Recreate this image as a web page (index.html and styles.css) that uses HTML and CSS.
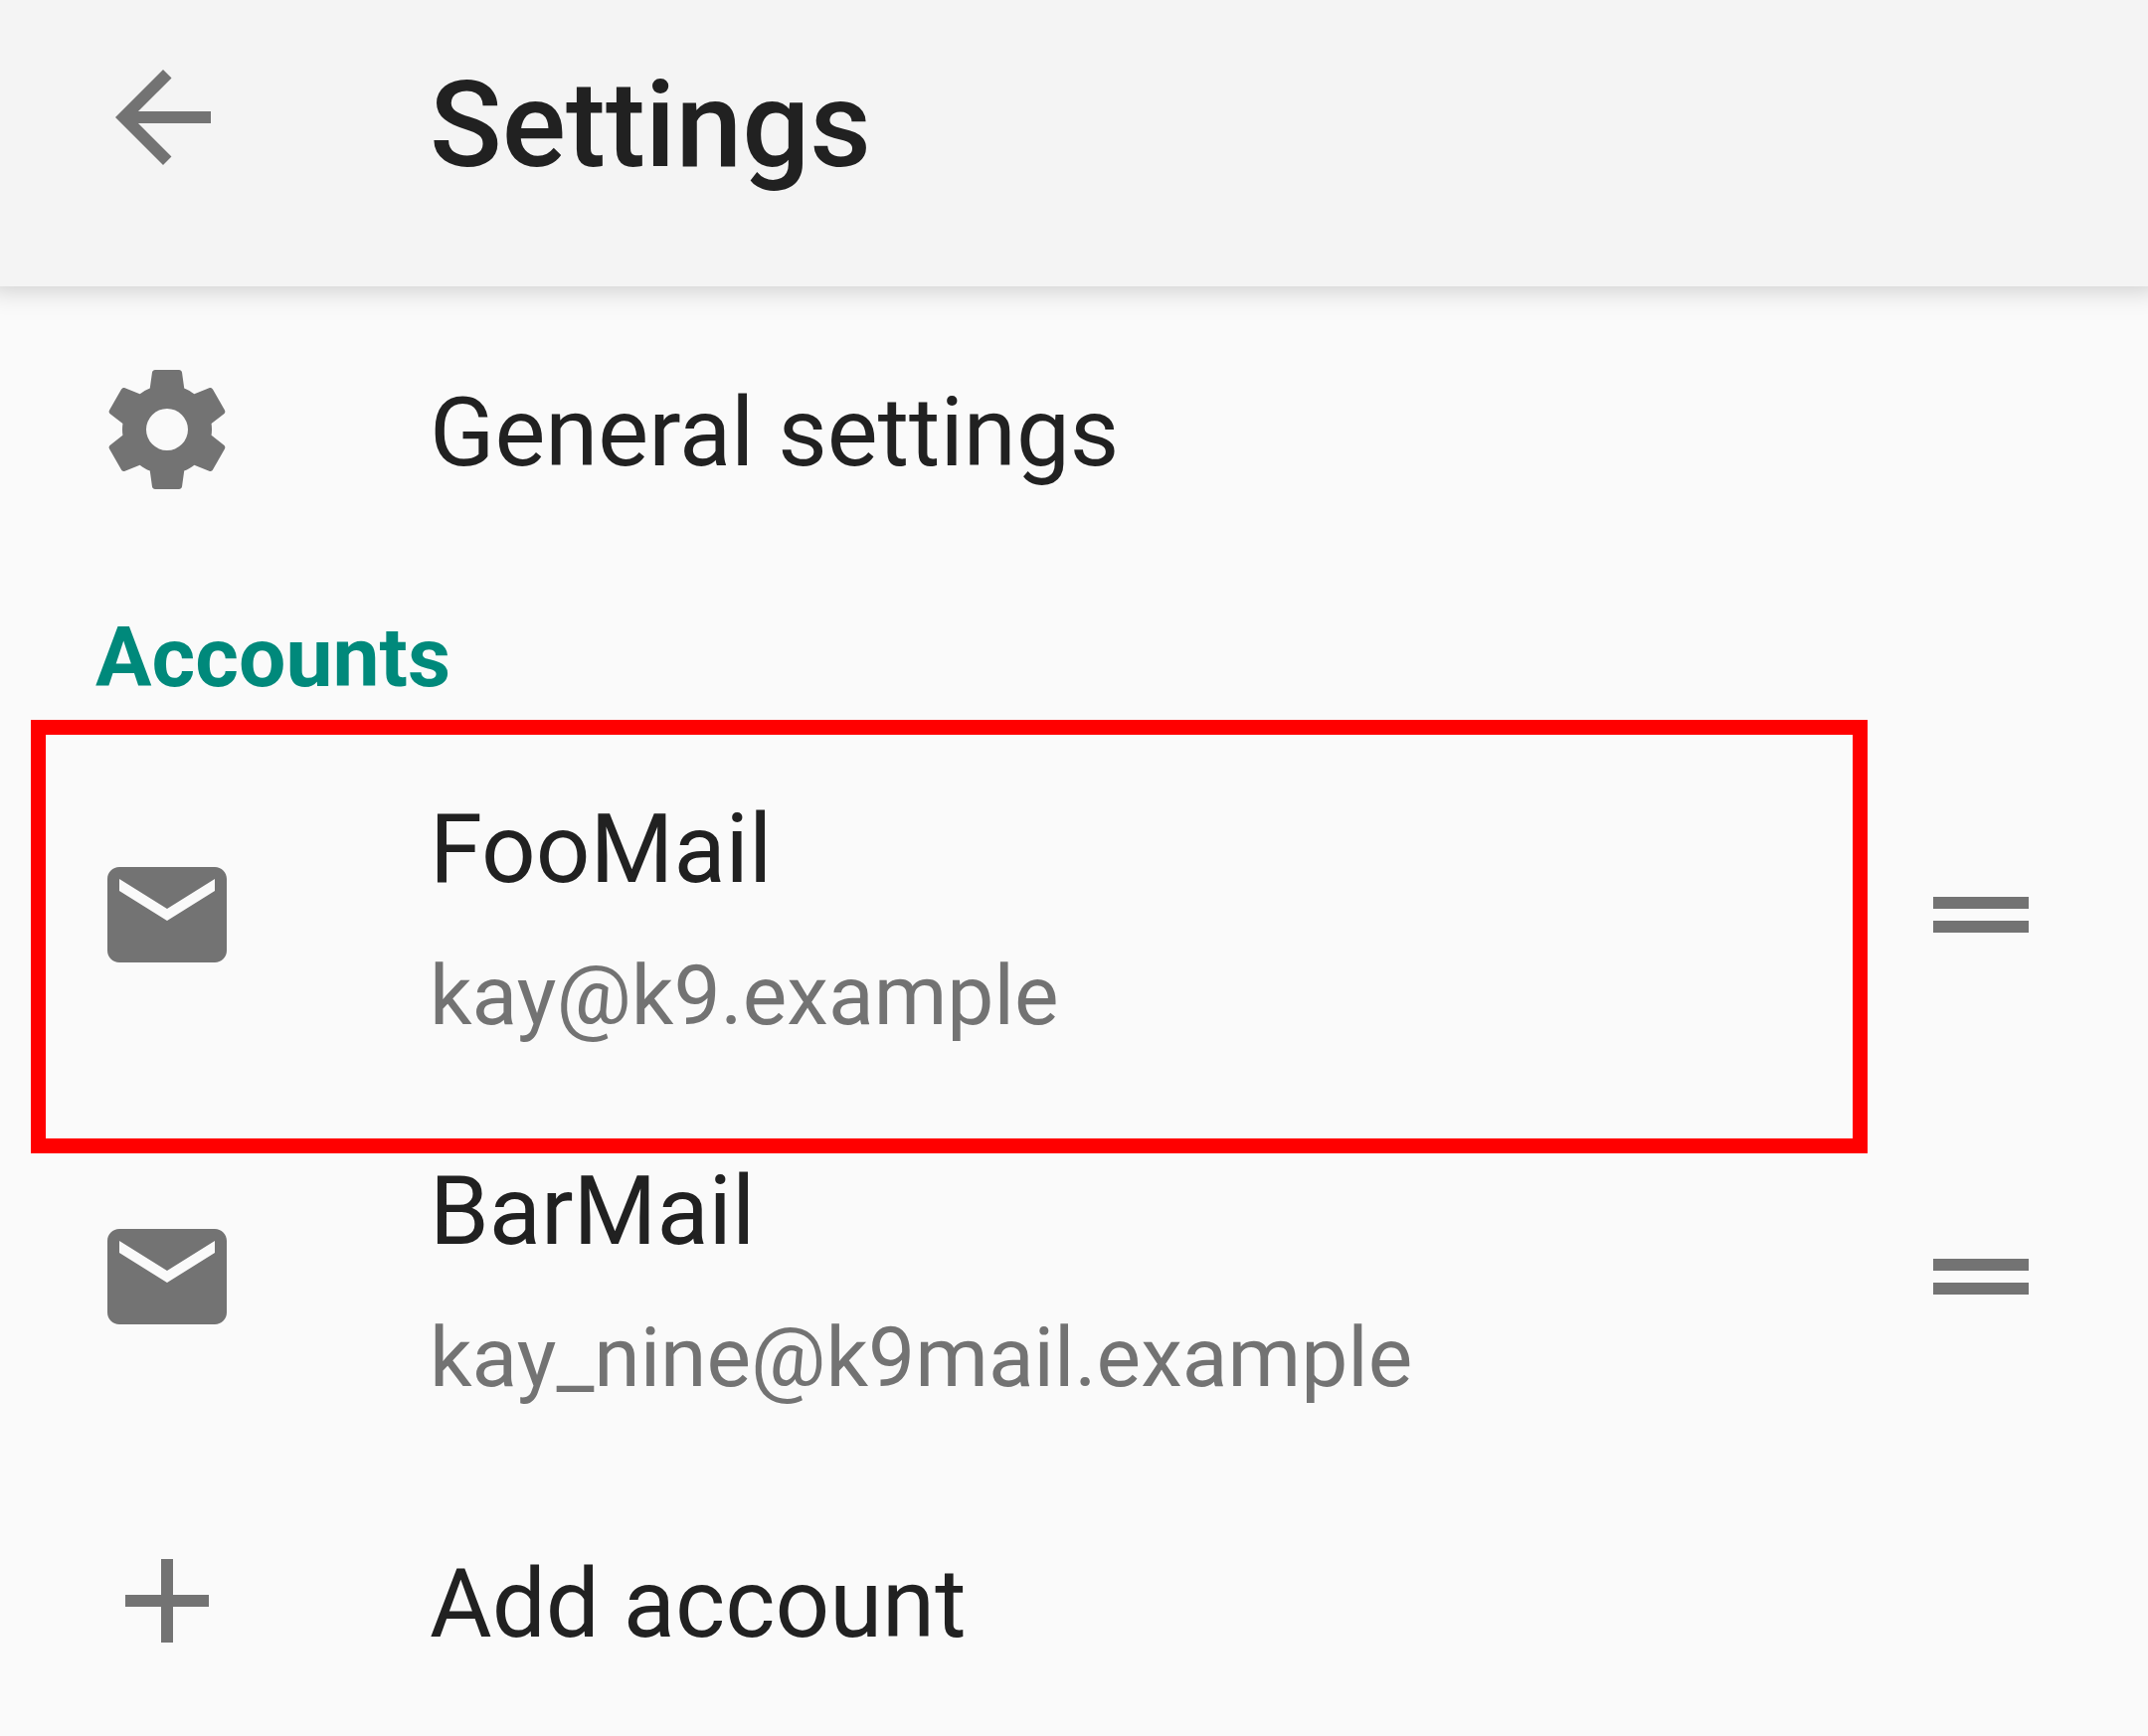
FILE: index.html
```html
<!DOCTYPE html>
<html lang="en">
<head>
<meta charset="utf-8">
<meta name="viewport" content="width=device-width, initial-scale=1">
<title>Settings</title>
<link rel="stylesheet" href="styles.css">
</head>
<body>
<header class="app-bar">
  <button class="icon-button back" type="button" aria-label="Back">
    <svg class="icon" viewBox="0 0 24 24" aria-hidden="true"><path d="M20 11H7.83l5.59-5.59L12 4l-8 8 8 8 1.41-1.41L7.83 13H20v-2z"/></svg>
  </button>
  <h1 class="app-title">Settings</h1>
</header>
<main class="settings">
  <button class="row" type="button">
    <svg class="icon" viewBox="0 0 24 24" aria-hidden="true"><path d="M12,15.5A3.5,3.5 0 0,1 8.5,12A3.5,3.5 0 0,1 12,8.5A3.5,3.5 0 0,1 15.5,12A3.5,3.5 0 0,1 12,15.5M19.43,12.97C19.47,12.65 19.5,12.33 19.5,12C19.5,11.67 19.47,11.34 19.43,11L21.54,9.37C21.73,9.22 21.78,8.95 21.66,8.73L19.66,5.27C19.54,5.05 19.27,4.96 19.05,5.05L16.56,6.05C16.04,5.66 15.5,5.32 14.87,5.07L14.5,2.42C14.46,2.18 14.25,2 14,2H10C9.75,2 9.54,2.18 9.5,2.42L9.13,5.07C8.5,5.32 7.96,5.66 7.44,6.05L4.95,5.05C4.73,4.96 4.46,5.05 4.34,5.27L2.34,8.73C2.21,8.95 2.27,9.22 2.46,9.37L4.57,11C4.53,11.34 4.5,11.67 4.5,12C4.5,12.33 4.53,12.65 4.57,12.97L2.46,14.63C2.27,14.78 2.21,15.05 2.34,15.27L4.34,18.73C4.46,18.95 4.73,19.03 4.95,18.95L7.44,17.94C7.96,18.34 8.5,18.68 9.13,18.93L9.5,21.58C9.54,21.82 9.75,22 10,22H14C14.25,22 14.46,21.82 14.5,21.58L14.87,18.93C15.5,18.67 16.04,18.34 16.56,17.94L19.05,18.95C19.27,19.03 19.54,18.95 19.66,18.73L21.66,15.27C21.78,15.05 21.73,14.78 21.54,14.63L19.43,12.97Z"/></svg>
    <span class="row-title">General settings</span>
  </button>
  <h2 class="section-title">Accounts</h2>
  <ul class="accounts">
    <li class="account highlighted">
      <svg class="icon" viewBox="0 0 24 24" aria-hidden="true"><path d="M20 4H4c-1.100 0-2 .9-2 2v12c0 1.100.9 2 2 2h16c1.100 0 2-.9 2-2V6c0-1.100-.9-2-2-2zm0 4l-8 5-8-5V6l8 5 8-5v2z"/></svg>
      <a class="account-text" href="#foomail">
        <span class="row-title">FooMail</span>
        <span class="row-summary">kay@k9.example</span>
      </a>
      <button class="icon-button" type="button" aria-label="Reorder FooMail">
        <svg class="icon" viewBox="0 0 24 24" aria-hidden="true"><path d="M20 9H4v2h16V9zM4 15h16v-2H4v2z"/></svg>
      </button>
    </li>
    <li class="account">
      <svg class="icon" viewBox="0 0 24 24" aria-hidden="true"><path d="M20 4H4c-1.100 0-2 .9-2 2v12c0 1.100.9 2 2 2h16c1.100 0 2-.9 2-2V6c0-1.100-.9-2-2-2zm0 4l-8 5-8-5V6l8 5 8-5v2z"/></svg>
      <a class="account-text" href="#barmail">
        <span class="row-title">BarMail</span>
        <span class="row-summary">kay_nine@k9mail.example</span>
      </a>
      <button class="icon-button" type="button" aria-label="Reorder BarMail">
        <svg class="icon" viewBox="0 0 24 24" aria-hidden="true"><path d="M20 9H4v2h16V9zM4 15h16v-2H4v2z"/></svg>
      </button>
    </li>
  </ul>
  <button class="row row-last" type="button">
    <svg class="icon" viewBox="0 0 24 24" aria-hidden="true"><path d="M19 13h-6v6h-2v-6H5v-2h6V5h2v6h6v2z"/></svg>
    <span class="row-title">Add account</span>
  </button>
</main>
</body>
</html>
```
FILE: styles.css
```css
* {
  box-sizing: border-box;
}

body {
  margin: 0;
  background: #fafafa;
  color: #212121;
  font-family: Roboto, "Liberation Sans", sans-serif;
}

button {
  padding: 0;
  border: 0;
  background: none;
  color: inherit;
  font: inherit;
  text-align: left;
}

.icon {
  display: block;
  flex: none;
  width: 144px;
  height: 144px;
  fill: #737373;
}

.icon-button {
  flex: none;
}

.app-bar {
  display: flex;
  align-items: flex-start;
  gap: 196px;
  padding: 46px 92px 92px;
  background: #f4f4f4;
  box-shadow: 0 -8px 24px 12px rgba(0, 0, 0, 0.18);
}

.app-title {
  margin: 0;
  padding-top: 10px;
  font-size: 120px;
  font-weight: 500;
  line-height: 140px;
}

.row {
  display: flex;
  align-items: center;
  gap: 192px;
  width: 100%;
  padding: 72px 96px;
}

.row .row-title {
  padding-top: 6px;
}

.row-last {
  padding-bottom: 48px;
}

.row-title {
  font-size: 96px;
  line-height: 112px;
}

.section-title {
  margin: 0;
  padding: 36px 96px 26px;
  color: #00897b;
  font-size: 84px;
  font-weight: 700;
  line-height: 100px;
}

.accounts {
  margin: 0;
  padding: 0;
  list-style: none;
}

.account {
  position: relative;
  display: flex;
  align-items: center;
  gap: 192px;
  padding: 50px 96px;
}

.account-text {
  display: flex;
  flex: 1;
  flex-direction: column;
  gap: 42px;
  padding-top: 10px;
  color: inherit;
  text-decoration: none;
}

.row-summary {
  color: #737373;
  font-size: 84px;
  line-height: 100px;
}

/* Frame round the account to choose; it leaves the drag handle outside. */
.highlighted::after {
  content: "";
  position: absolute;
  inset: -14px 282px -58px 31px;
  border: 15px solid #ff0000;
  pointer-events: none;
}
```
